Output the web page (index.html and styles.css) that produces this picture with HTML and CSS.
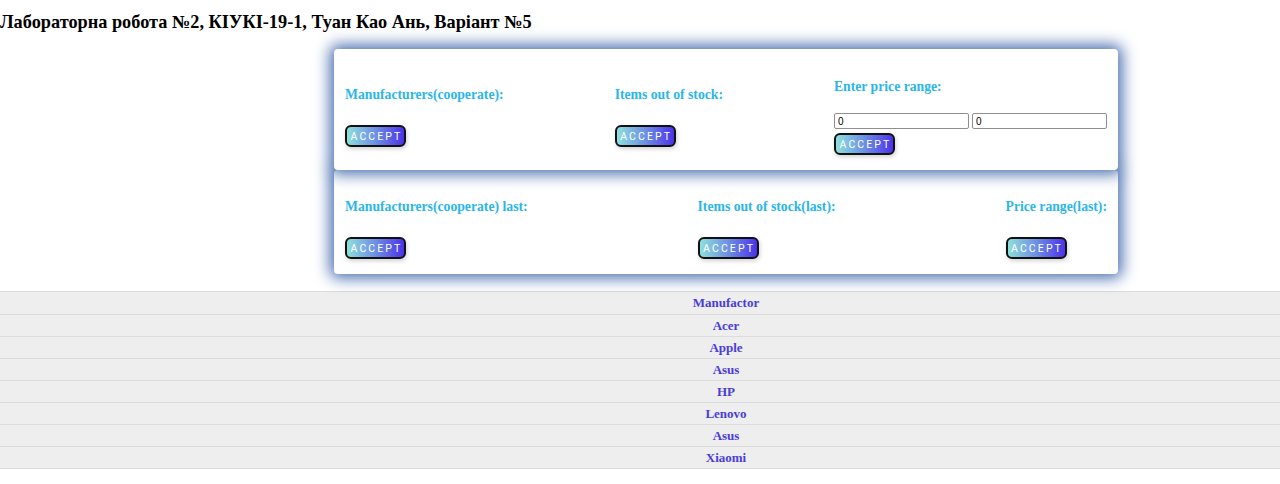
FILE: index.html
```html
<!DOCTYPE html>
<html>
<head>
<meta charset="utf-8">
<link rel="stylesheet" href="styles.css">
</head>
<body>
<h3 class="title">Лабораторна робота №2, КІУКІ-19-1, Туан Као Ань, Варіант №5</h3>
<div class="panels">
  <div class="card card-top">
    <div class="col">
      <h4 class="label">Manufacturers(cooperate):</h4>
      <button class="btn">ACCEPT</button>
    </div>
    <div class="col">
      <h4 class="label">Items out of stock:</h4>
      <button class="btn">ACCEPT</button>
    </div>
    <div class="col">
      <h4 class="label label-price">Enter price range:</h4>
      <div class="inputs">
        <input class="inp" type="text" value="0">
        <input class="inp" type="text" value="0">
      </div>
      <button class="btn btn-price">ACCEPT</button>
    </div>
  </div>
  <div class="card card-bottom">
    <div class="col">
      <h4 class="label">Manufacturers(cooperate) last:</h4>
      <button class="btn">ACCEPT</button>
    </div>
    <div class="col">
      <h4 class="label">Items out of stock(last):</h4>
      <button class="btn">ACCEPT</button>
    </div>
    <div class="col">
      <h4 class="label">Price range(last):</h4>
      <button class="btn">ACCEPT</button>
    </div>
  </div>
</div>
<table class="tbl">
  <tr><th>Manufactor</th></tr>
  <tr><td>Acer</td></tr>
  <tr><td>Apple</td></tr>
  <tr><td>Asus</td></tr>
  <tr><td>HP</td></tr>
  <tr><td>Lenovo</td></tr>
  <tr><td>Asus</td></tr>
  <tr><td>Xiaomi</td></tr>
</table>
</body>
</html>
```

FILE: styles.css
```css
html {
  overflow: hidden;
}
html, body {
  margin: 0;
  padding: 0;
  background: #fff;
  font-family: "Liberation Serif", "Times New Roman", serif;
}
body {
  width: 1452px;
}
.title {
  margin: 11px 0 0 0;
  font-size: 18.3px;
  line-height: 22px;
  font-weight: bold;
  color: #000;
}
.panels {
  width: 784px;
  margin: 16px auto 0;
}
.card {
  background: #fff;
  border-radius: 4px;
  box-shadow: 0 0 15px 4px rgba(60, 100, 170, 0.95);
  display: flex;
  justify-content: space-between;
  align-items: flex-start;
  padding: 0 11px;
  position: relative;
}
.card-top {
  height: 121px;
  z-index: 1;
}
.card-bottom {
  height: 104px;
}
.col {
  display: flex;
  flex-direction: column;
  align-items: flex-start;
}
.label {
  margin: 0;
  font-size: 13.7px;
  line-height: 16px;
  font-weight: bold;
  color: #2bb6ea;
}
.card-top .label {
  margin-top: 38px;
  margin-bottom: 22px;
}
.card-top .label-price {
  margin-top: 30px;
  margin-bottom: 18px;
}
.card-bottom .label {
  margin-top: 29px;
  margin-bottom: 22px;
}
.inputs {
  display: flex;
  gap: 3px;
}
.inp {
  width: 135px;
  height: 16px;
  box-sizing: border-box;
  border: 1px solid #8f8f8f;
  border-radius: 2px;
  padding: 0 3px;
  font-family: "Liberation Sans", Arial, sans-serif;
  font-size: 10px;
  color: #000;
  background: #fff;
}
.btn {
  width: 61px;
  height: 22px;
  box-sizing: border-box;
  border: 2px solid #111;
  border-radius: 6px;
  background: linear-gradient(90deg, #8de0dc 0%, #6d8fe4 50%, #4b32ea 100%);
  color: #fff;
  font-family: "Roboto", "Liberation Sans", sans-serif;
  font-size: 10.5px;
  font-weight: 400;
  letter-spacing: 2.1px;
  padding: 0 0 0 2px;
  box-shadow: 1px 2px 4px rgba(0, 0, 0, 0.18);
}
.btn-price {
  margin-top: 4px;
}
.tbl {
  width: 100%;
  margin-top: 17px;
  border-collapse: collapse;
}
.tbl th, .tbl td {
  background: #eeeeee;
  border-top: 1px solid #dcdcdc;
  height: 21px;
  padding: 0;
  text-align: center;
  font-size: 13px;
  font-weight: bold;
  color: #4a3ddb;
}
.tbl th {
  height: 22px;
}
.tbl tr:last-child td {
  border-bottom: 1px solid #dcdcdc;
}
```
